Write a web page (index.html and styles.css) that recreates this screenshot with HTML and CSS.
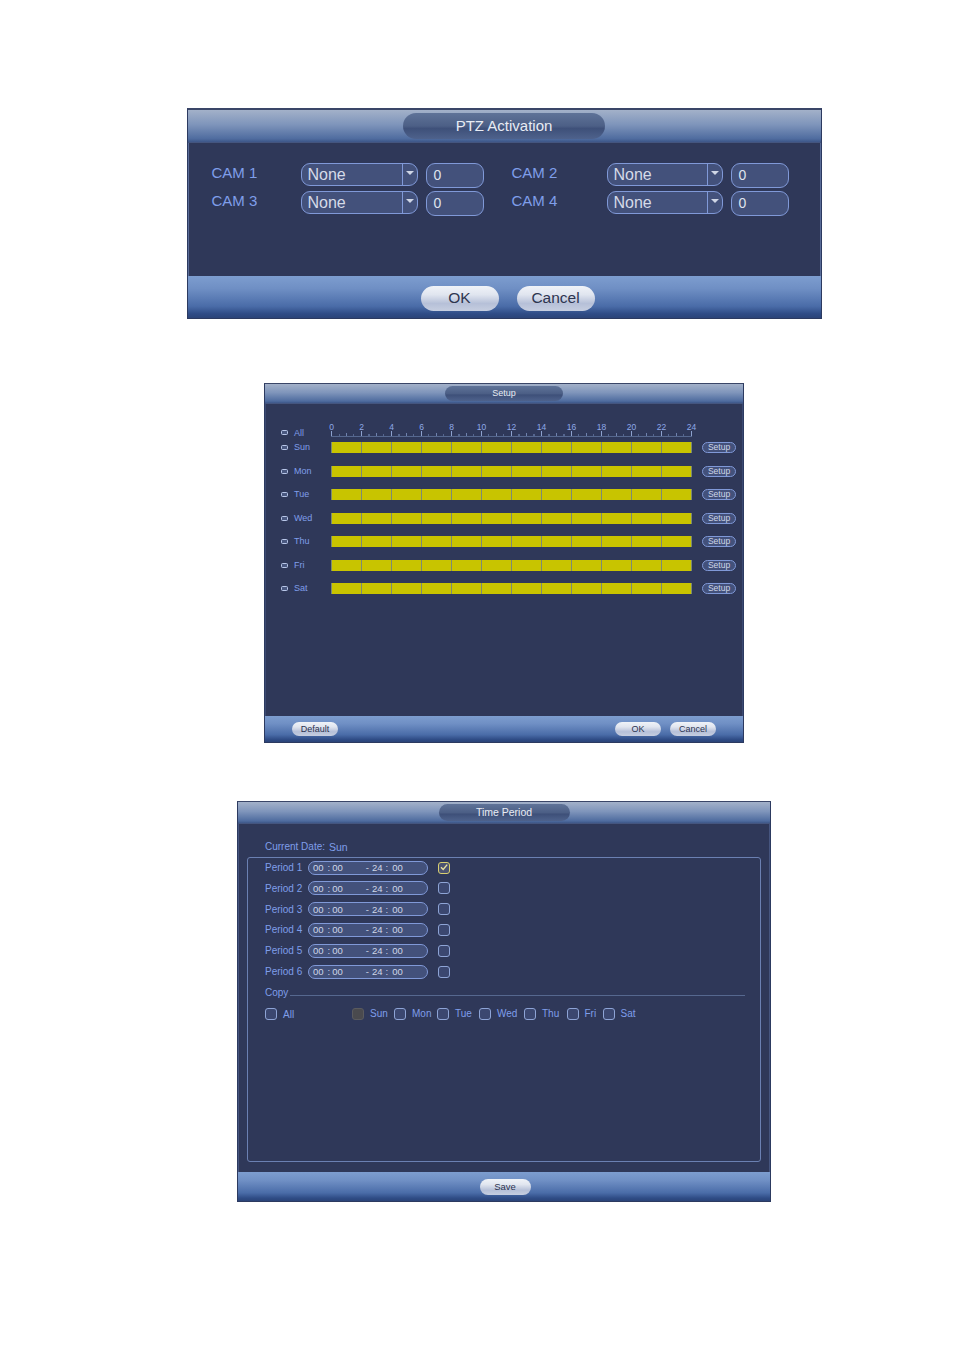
FILE: index.html
```html
<!DOCTYPE html>
<html lang="en">
<head>
    <meta charset="UTF-8">
    <title>PTZ Activation</title>
    <link rel="stylesheet" href="styles.css">
</head>
<body>
    <div class="panel ptz">
        <div class="titlebar"><span class="pill">PTZ Activation</span></div>
        <div class="content">
            <div class="cam-grid">
                <span class="cam-label">CAM 1</span>
                <div class="select"><span class="value">None</span><span class="arrow"></span></div>
                <div class="num">0</div>
                <span class="cam-label second">CAM 2</span>
                <div class="select"><span class="value">None</span><span class="arrow"></span></div>
                <div class="num">0</div>
                <span class="cam-label">CAM 3</span>
                <div class="select"><span class="value">None</span><span class="arrow"></span></div>
                <div class="num">0</div>
                <span class="cam-label second">CAM 4</span>
                <div class="select"><span class="value">None</span><span class="arrow"></span></div>
                <div class="num">0</div>
            </div>
        </div>
        <div class="footer">
            <button class="btn">OK</button>
            <button class="btn">Cancel</button>
        </div>
    </div>

    <div class="panel setup">
        <div class="titlebar"><span class="pill">Setup</span></div>
        <div class="content">
            <div class="sched-head">
                <span class="mini"></span><span class="day">All</span>
                <div class="ruler">
                    <span>0</span><span>2</span><span>4</span><span>6</span><span>8</span><span>10</span><span>12</span>
                    <span>14</span><span>16</span><span>18</span><span>20</span><span>22</span><span>24</span>
                </div>
            </div>
            <div class="sched-row"><span class="mini"></span><span class="day">Sun</span><div class="bar"></div><span class="setup-btn">Setup</span></div>
            <div class="sched-row"><span class="mini"></span><span class="day">Mon</span><div class="bar"></div><span class="setup-btn">Setup</span></div>
            <div class="sched-row"><span class="mini"></span><span class="day">Tue</span><div class="bar"></div><span class="setup-btn">Setup</span></div>
            <div class="sched-row"><span class="mini"></span><span class="day">Wed</span><div class="bar"></div><span class="setup-btn">Setup</span></div>
            <div class="sched-row"><span class="mini"></span><span class="day">Thu</span><div class="bar"></div><span class="setup-btn">Setup</span></div>
            <div class="sched-row"><span class="mini"></span><span class="day">Fri</span><div class="bar"></div><span class="setup-btn">Setup</span></div>
            <div class="sched-row"><span class="mini"></span><span class="day">Sat</span><div class="bar"></div><span class="setup-btn">Setup</span></div>
        </div>
        <div class="footer">
            <button class="btn">Default</button>
            <span class="spacer"></span>
            <button class="btn">OK</button>
            <button class="btn">Cancel</button>
        </div>
    </div>

    <div class="panel period">
        <div class="titlebar"><span class="pill">Time Period</span></div>
        <div class="content">
            <div class="current"><span>Current Date:</span><span class="current-day">Sun</span></div>
            <div class="group">
                <div class="period-row">
                    <span class="period-label">Period 1</span>
                    <div class="time"><span>00</span><span class="c1">:</span><span>00</span><span class="dash">-</span><span>24</span><span class="c2">:</span><span>00</span></div>
                    <span class="check on"><svg viewBox="0 0 12 12" width="12" height="12"><path d="M3 6.2 5.2 8.4 9.2 3.6" fill="none" stroke="#e8e0a0" stroke-width="1.4"/></svg></span>
                </div>
                <div class="period-row">
                    <span class="period-label">Period 2</span>
                    <div class="time"><span>00</span><span class="c1">:</span><span>00</span><span class="dash">-</span><span>24</span><span class="c2">:</span><span>00</span></div>
                    <span class="check"></span>
                </div>
                <div class="period-row">
                    <span class="period-label">Period 3</span>
                    <div class="time"><span>00</span><span class="c1">:</span><span>00</span><span class="dash">-</span><span>24</span><span class="c2">:</span><span>00</span></div>
                    <span class="check"></span>
                </div>
                <div class="period-row">
                    <span class="period-label">Period 4</span>
                    <div class="time"><span>00</span><span class="c1">:</span><span>00</span><span class="dash">-</span><span>24</span><span class="c2">:</span><span>00</span></div>
                    <span class="check"></span>
                </div>
                <div class="period-row">
                    <span class="period-label">Period 5</span>
                    <div class="time"><span>00</span><span class="c1">:</span><span>00</span><span class="dash">-</span><span>24</span><span class="c2">:</span><span>00</span></div>
                    <span class="check"></span>
                </div>
                <div class="period-row">
                    <span class="period-label">Period 6</span>
                    <div class="time"><span>00</span><span class="c1">:</span><span>00</span><span class="dash">-</span><span>24</span><span class="c2">:</span><span>00</span></div>
                    <span class="check"></span>
                </div>
                <div class="copy"><span>Copy</span><span class="copy-line"></span></div>
                <div class="copy-row">
                    <span class="check"></span><span class="copy-all">All</span>
                    <span class="check off"></span><span class="copy-day w-sun">Sun</span>
                    <span class="check"></span><span class="copy-day w-mon">Mon</span>
                    <span class="check"></span><span class="copy-day w-tue">Tue</span>
                    <span class="check"></span><span class="copy-day w-wed">Wed</span>
                    <span class="check"></span><span class="copy-day w-thu">Thu</span>
                    <span class="check"></span><span class="copy-day w-fri">Fri</span>
                    <span class="check"></span><span class="copy-day">Sat</span>
                </div>
            </div>
        </div>
        <div class="footer">
            <button class="btn">Save</button>
        </div>
    </div>
</body>
</html>
```

FILE: styles.css
```css
body {
    font-family: "Liberation Sans", Arial, sans-serif;
    margin: 0;
    padding: 108px 0 0 54px;
    display: flex;
    flex-direction: column;
    align-items: center;
    background-color: #fff;
}

.panel {
    display: flex;
    flex-direction: column;
    border: 1px solid #2c3a60;
    border-top-color: #3a4668;
    box-sizing: border-box;
    background-color: #2f3859;
}

.titlebar {
    display: flex;
    justify-content: center;
    box-sizing: border-box;
    background: linear-gradient(#a3b1c9, #7f95bb 45%, #4f6c9f 90%, #3d5688);
    border-bottom: 1px solid #44557f;
}

.pill {
    display: flex;
    align-items: center;
    justify-content: center;
    box-sizing: border-box;
    color: #e8ecf4;
    border-radius: 14px;
    padding-bottom: 1px;
    background: linear-gradient(#5f7398, #4c5f86 50%, #3e5079 60%, #4e628c);
}

.content {
    flex: 1;
    box-sizing: border-box;
    border-left: 1px solid #5a6c98;
    border-right: 1px solid #5a6c98;
}

.footer {
    display: flex;
    box-sizing: border-box;
    background: linear-gradient(#7d9dcf, #6f8fc4 30%, #4a6ca8 72%, #2f4c86 90%, #2b4478);
}

.btn {
    padding: 0;
    border: 0;
    font-family: inherit;
    color: #2b3350;
    background: linear-gradient(#f0f3f8, #e0e5ef 35%, #b6c0d8 70%, #c6cee0);
}

.spacer {
    flex: 1;
}

/* PTZ Activation */
.ptz {
    width: 635px;
    height: 211px;
    border-top-width: 2px;
}

.ptz .titlebar {
    height: 33px;
    padding-top: 3px;
}

.ptz .pill {
    width: 202px;
    height: 26px;
    font-size: 15px;
}

.ptz .content {
    padding: 20px 0 0 23px;
}

.ptz .footer {
    height: 42px;
    padding: 10px 0 0 233px;
    gap: 18px;
}

.ptz .btn {
    width: 78px;
    height: 25px;
    border-radius: 12.5px;
    font-size: 15.5px;
    padding-bottom: 2px;
    color: #2e3550;
}

.cam-grid {
    display: grid;
    grid-template-columns: 89px 117px 66px 123px 116px 66px;
    grid-template-rows: 25px 25px;
    row-gap: 3px;
}

.cam-label {
    font-size: 15px;
    line-height: 20px;
    color: #7f9eea;
}

.cam-label.second {
    padding-left: 28px;
}

.select {
    display: flex;
    align-items: center;
    box-sizing: border-box;
    height: 23px;
    border: 1.5px solid #8099d8;
    border-radius: 9px;
    background-color: #43517b;
    color: #d5dae8;
    font-size: 16px;
}

.select .value {
    flex: 1;
    padding-left: 6px;
}

.select .arrow {
    position: relative;
    width: 15px;
    height: 100%;
    box-sizing: border-box;
    border-left: 1px solid #8099d8;
}

.select .arrow::after {
    content: "";
    position: absolute;
    left: 3px;
    top: 7px;
    border: 4px solid transparent;
    border-top: 4px solid #cfd6e6;
}

.num {
    display: flex;
    align-items: center;
    box-sizing: border-box;
    width: 58px;
    margin-left: 8px;
    height: 25px;
    padding: 0 0 2px 7px;
    border: 1.5px solid #8099d8;
    border-radius: 9px;
    background-color: #43517b;
    color: #dfe3ee;
    font-size: 14px;
}

/* Setup */
.setup {
    width: 480px;
    height: 360px;
    margin-top: 64px;
}

.setup .titlebar {
    height: 20px;
    padding-top: 2px;
}

.setup .pill {
    width: 118px;
    height: 15px;
    font-size: 9px;
    border-radius: 8px;
}

.setup .content {
    padding: 18px 0 0 15px;
    border-color: #3c4a72;
}

.setup .footer {
    height: 26px;
    padding: 6px 27px 0 27px;
    gap: 9px;
}

.setup .btn {
    width: 46px;
    height: 14px;
    border-radius: 7px;
    font-size: 9px;
}

.sched-head {
    display: flex;
    align-items: flex-end;
    height: 15px;
}

.sched-row {
    display: flex;
    align-items: center;
    height: 11px;
    margin-top: 12.5px;
}

.sched-head + .sched-row {
    margin-top: 5px;
}

.mini {
    width: 7px;
    height: 5px;
    box-sizing: border-box;
    border: 1px solid #b8c6e8;
    border-radius: 1.5px;
    background-color: #4a5880;
}

.sched-head .mini {
    margin-bottom: 2px;
}

.sched-head .day {
    margin-bottom: -2px;
}

.day {
    width: 37px;
    margin-left: 6px;
    font-size: 9px;
    line-height: 11px;
    color: #7f9eea;
}

.ruler {
    display: flex;
    width: 361px;
    height: 15px;
    box-sizing: border-box;
    border-bottom: 1px solid #56688f;
    background:
        repeating-linear-gradient(90deg, #8da2cf 0 1px, transparent 1px 30px) 0 100% / 100% 5px no-repeat,
        repeating-linear-gradient(90deg, #6f82ae 0 1px, transparent 1px 15px) 0 100% / 100% 3px no-repeat,
        repeating-linear-gradient(90deg, #55668f 0 1px, transparent 1px 7.5px) 0 100% / 100% 2px no-repeat;
}

.ruler span {
    flex: none;
    width: 30px;
    margin-left: -15px;
    margin-right: 15px;
    text-align: center;
    font-size: 8.5px;
    line-height: 11px;
    color: #8ea8e8;
}

.ruler span:first-child {
    margin-left: -14.5px;
}

.bar {
    width: 361px;
    height: 11px;
    background: repeating-linear-gradient(90deg, #7c8a74 0 1px, #c8c400 1px 30px);
    border-right: 1px solid #7c8a74;
    box-sizing: border-box;
}

.setup-btn {
    width: 34px;
    height: 11px;
    margin-left: 10px;
    box-sizing: border-box;
    border: 1px solid #8099d8;
    border-radius: 6px;
    background-color: #43517b;
    color: #cfd6e8;
    font-size: 8.5px;
    line-height: 9px;
    text-align: center;
}

/* Time Period */
.period {
    width: 534px;
    height: 401px;
    margin-top: 58px;
}

.period .titlebar {
    height: 22px;
    padding-top: 2px;
}

.period .pill {
    width: 131px;
    height: 17px;
    font-size: 10.5px;
    border-radius: 9px;
}

.period .content {
    padding: 17px 8px 0 8px;
    height: 348px;
    flex: none;
    border-color: #46557f;
}

.period .footer {
    height: 30px;
    padding-top: 7px;
    justify-content: center;
}

.period .btn {
    width: 51px;
    height: 16px;
    border-radius: 8px;
    font-size: 9.5px;
    margin-left: 2px;
    padding-bottom: 1px;
}

.current {
    display: flex;
    height: 16px;
    padding-left: 18px;
    font-size: 10px;
    line-height: 12px;
    color: #7f9eea;
}

.current-day {
    margin-left: 4px;
    font-size: 10.5px;
}

.group {
    box-sizing: border-box;
    height: 305px;
    padding: 3px 15px 0 17px;
    border: 1px solid #6b80b2;
    border-radius: 3px;
}

.period-row {
    display: flex;
    align-items: center;
    height: 14px;
    margin-bottom: 6.8px;
}

.period-label {
    width: 43px;
    font-size: 10px;
    color: #7f9eea;
}

.time {
    display: flex;
    align-items: center;
    box-sizing: border-box;
    width: 120px;
    height: 14px;
    padding-left: 4px;
    border: 1px solid #8099d8;
    border-radius: 7px;
    background-color: #43517b;
    color: #cfd6e8;
    font-size: 9.5px;
}

.time .c1 {
    margin: 0 2px 0 4px;
}

.time .dash {
    margin: 0 3px 0 23px;
}

.time .c2 {
    margin: 0 4px 0 3px;
}

.check {
    box-sizing: border-box;
    display: block;
    flex: none;
    width: 12px;
    height: 12px;
    border: 1.5px solid #8ea4d6;
    border-radius: 3px;
    background-color: #3b4770;
}

.period-row .check {
    margin-left: 10px;
}

.check svg {
    display: block;
    margin: -1.5px;
}

.check.on {
    border-color: #d8cf70;
    background-color: #4b5270;
}

.check.off {
    border-color: #5a5a5e;
    background-color: #4a4a4e;
}

.copy {
    display: flex;
    align-items: flex-end;
    height: 14px;
    font-size: 10px;
    line-height: 12px;
    color: #7f9eea;
}

.copy-line {
    flex: 1;
    height: 1px;
    margin: 0 0 3px 2px;
    background-color: #56688f;
}

.copy-row {
    display: flex;
    align-items: center;
    height: 14px;
    margin-top: 8px;
    font-size: 10px;
    color: #7f9eea;
}

.copy-all {
    width: 69px;
    margin-left: 6px;
}

.copy-day {
    margin-left: 6px;
    margin-top: -1px;
}

.w-sun { width: 24px; }
.w-mon { width: 25px; }
.w-tue { width: 24px; }
.w-wed { width: 27px; }
.w-thu { width: 24.5px; }
.w-fri { width: 18px; }
```
